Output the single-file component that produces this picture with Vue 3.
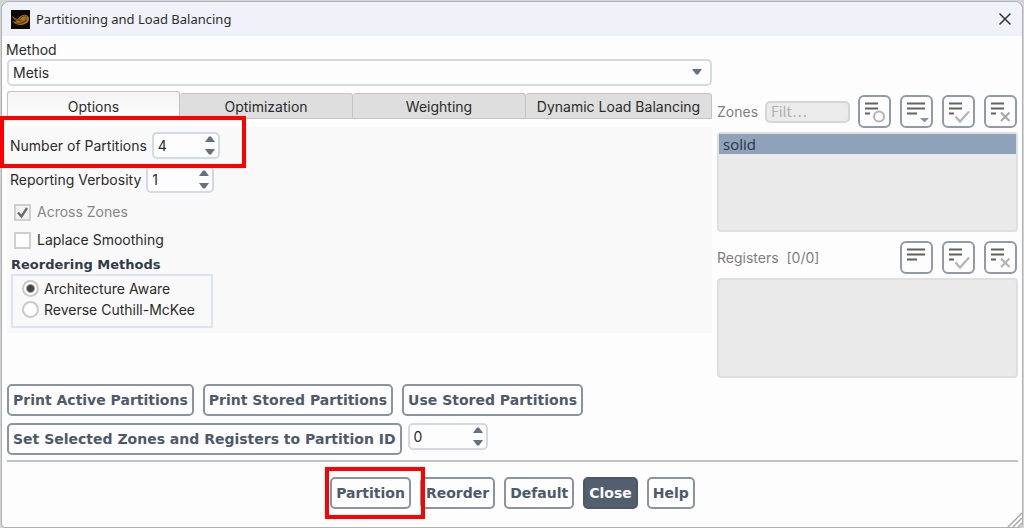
<script setup>
import { ref } from 'vue'

const method = ref('Metis')
const tabs = ['Options', 'Optimization', 'Weighting', 'Dynamic Load Balancing']
const activeTab = ref('Options')
const partitions = ref(4)
const verbosity = ref(1)
const partitionId = ref(0)
const acrossZones = ref(true)
const laplace = ref(false)
const ordering = ref('Architecture Aware')
const orderings = ['Architecture Aware', 'Reverse Cuthill-McKee']
const zoneTools = [
  { kind: 'circle', label: 'Filter mode' },
  { kind: 'menu', label: 'List options' },
  { kind: 'check', label: 'Select all zones' },
  { kind: 'cross', label: 'Deselect all zones' },
]
const registerTools = [
  { kind: 'lines', label: 'List registers' },
  { kind: 'check', label: 'Select all registers' },
  { kind: 'cross', label: 'Deselect all registers' },
]
const isLong = (kind) => kind === 'menu' || kind === 'lines'
</script>

<template>
  <div class="desktop">
    <main class="window">
      <header class="titlebar">
        <svg class="logo" viewBox="0 0 19 19" aria-hidden="true">
          <rect width="19" height="19" fill="#0b0806" />
          <path d="M1 6c2 1 4 3 6 3 2-3 5-5 8-4 3 1 4 4 2 7-3 3-8 4-12 2-2-1-3-2-4-3 2 1 4 1 5 0-2-1-4-2-5-5z" fill="#a8741a" />
          <path d="M8 10c2-4 6-5 8-3M9 12c3 1 6-1 6-4M2 8c3 2 6 3 9 2M5 13c4 1 8 0 11-3" fill="none" stroke="#4a300b" stroke-width=".8" />
        </svg>
        <h1>Partitioning and Load Balancing</h1>
        <button class="close-x" aria-label="Close window">
          <svg viewBox="0 0 14 14"><path d="M1.500 1.500l11 11M12.500 1.500l-11 11" stroke="#333" stroke-width="1.500" /></svg>
        </button>
      </header>

      <div class="content">
        <div class="columns">
          <section class="left">
            <label class="method-label" for="method">Method</label>
            <div class="select-wrap">
              <select id="method" v-model="method"><option>Metis</option></select>
              <svg class="caret" viewBox="0 0 10 6"><path d="M0 0h10l-4 5.500h-2z" fill="#657180" /></svg>
            </div>

            <div class="tabs" role="tablist">
              <button v-for="t in tabs" :key="t" role="tab" class="tab" :class="{ active: t === activeTab }" :aria-selected="t === activeTab" @click="activeTab = t">{{ t }}</button>
            </div>

            <div class="panel">
              <div class="field marked">
                <label for="parts">Number of Partitions</label>
                <div class="spin">
                  <input id="parts" v-model="partitions" type="number" />
                  <div class="steps">
                    <button aria-label="Increase partitions" @click="partitions++"><svg viewBox="0 0 10 6"><path d="M0 6h10l-4-5.500h-2z" /></svg></button>
                    <button aria-label="Decrease partitions" @click="partitions--"><svg viewBox="0 0 10 6"><path d="M0 0h10l-4 5.500h-2z" /></svg></button>
                  </div>
                </div>
                <span class="mark mark-field"></span>
              </div>
              <div class="field">
                <label for="verb">Reporting Verbosity</label>
                <div class="spin">
                  <input id="verb" v-model="verbosity" type="number" />
                  <div class="steps">
                    <button aria-label="Increase verbosity" @click="verbosity++"><svg viewBox="0 0 10 6"><path d="M0 6h10l-4-5.500h-2z" /></svg></button>
                    <button aria-label="Decrease verbosity" @click="verbosity--"><svg viewBox="0 0 10 6"><path d="M0 0h10l-4 5.500h-2z" /></svg></button>
                  </div>
                </div>
              </div>
              <label class="tick disabled">
                <span class="box">
                  <input v-model="acrossZones" type="checkbox" disabled />
                  <svg v-if="acrossZones" viewBox="0 0 17 17"><path d="M4 8.500l3.500 4L13 4" fill="none" stroke="#6d6d6d" stroke-width="2.400" /></svg>
                </span>
                Across Zones
              </label>
              <label class="tick">
                <span class="box">
                  <input v-model="laplace" type="checkbox" />
                  <svg v-if="laplace" viewBox="0 0 17 17"><path d="M4 8.500l3.500 4L13 4" fill="none" stroke="#444" stroke-width="2.400" /></svg>
                </span>
                Laplace Smoothing
              </label>
              <h2 id="reorder-title">Reordering Methods</h2>
              <div class="radios" role="radiogroup" aria-labelledby="reorder-title">
                <label v-for="o in orderings" :key="o">
                  <input v-model="ordering" type="radio" name="ordering" :value="o" />{{ o }}
                </label>
              </div>
            </div>
          </section>

          <section class="right">
            <div class="list-head">
              <label class="muted" for="filter">Zones</label>
              <input id="filter" class="filter" type="text" placeholder="Filt⋯" />
              <div class="tools">
                <button v-for="b in zoneTools" :key="b.kind" class="tool" :aria-label="b.label">
                  <svg viewBox="0 0 33 33" fill="none">
                    <path :d="isLong(b.kind) ? 'M7 8.500h18M7 13.500h18M7 18.500h10' : 'M7 8.500h13M7 13.500h13M7 18.500h5'" stroke="#636363" stroke-width="2.200" />
                    <circle v-if="b.kind === 'circle'" cx="21" cy="21.500" r="5" stroke="#b4b4b4" stroke-width="2" />
                    <path v-if="b.kind === 'menu'" d="M20 23h9l-4 4h-1z" fill="#8793a4" />
                    <path v-if="b.kind === 'check'" d="M13.500 21.500l4.500 5 9-10" stroke="#b4b4b4" stroke-width="2.200" />
                    <path v-if="b.kind === 'cross'" d="M17 17.500l8.500 8.500M25.500 17.500l-8.500 8.500" stroke="#a9a9a9" stroke-width="2.200" />
                  </svg>
                </button>
              </div>
            </div>
            <ul class="list" role="listbox" aria-label="Zones">
              <li role="option" aria-selected="true">solid</li>
            </ul>
            <div class="list-head">
              <span class="muted">Registers&nbsp; [0/0]</span>
              <div class="tools">
                <button v-for="b in registerTools" :key="b.kind" class="tool" :aria-label="b.label">
                  <svg viewBox="0 0 33 33" fill="none">
                    <path :d="isLong(b.kind) ? 'M7 8.500h18M7 13.500h18M7 18.500h10' : 'M7 8.500h13M7 13.500h13M7 18.500h5'" stroke="#5f605c" stroke-width="2.200" />
                    <path v-if="b.kind === 'check'" d="M13.500 21.500l4.500 5 9-10" stroke="#b4b4b4" stroke-width="2.200" />
                    <path v-if="b.kind === 'cross'" d="M17 17.500l8.500 8.500M25.500 17.500l-8.500 8.500" stroke="#b4b4b4" stroke-width="2.200" />
                  </svg>
                </button>
              </div>
            </div>
            <ul class="list" role="listbox" aria-label="Registers"></ul>
          </section>
        </div>

        <div class="actions">
          <div class="row">
            <button class="btn">Print Active Partitions</button>
            <button class="btn">Print Stored Partitions</button>
            <button class="btn">Use Stored Partitions</button>
          </div>
          <div class="row assign">
            <button class="btn">Set Selected Zones and Registers to Partition ID</button>
            <div class="spin wide">
              <input v-model="partitionId" type="number" aria-label="Partition ID" />
              <div class="steps">
                <button aria-label="Increase partition ID" @click="partitionId++"><svg viewBox="0 0 10 6"><path d="M0 6h10l-4-5.500h-2z" /></svg></button>
                <button aria-label="Decrease partition ID" @click="partitionId--"><svg viewBox="0 0 10 6"><path d="M0 0h10l-4 5.500h-2z" /></svg></button>
              </div>
            </div>
          </div>
        </div>

        <footer class="footer">
          <div class="marked">
            <button class="btn">Partition</button>
            <span class="mark mark-button"></span>
          </div>
          <button class="btn">Reorder</button>
          <button class="btn">Default</button>
          <button class="btn dark">Close</button>
          <button class="btn">Help</button>
        </footer>
      </div>
      <svg class="grip" viewBox="0 0 15 15"><path d="M1 15L15 1M6 15l9-9M11 15l4-4" stroke="#aaa" stroke-width="1.500" /></svg>
    </main>
  </div>
</template>

<style>
body { margin: 0; background: #d4d4d6; }
</style>

<style scoped>
* { box-sizing: border-box; }
.desktop { min-height: 100vh; padding: 1px 1px 0; display: flex; font: 14px/18px Inter, "Noto Sans CJK JP", sans-serif; color: #2b2b2b; }
.window { position: relative; flex: 1; border: 1px solid #aeb0b4; border-radius: 8px 8px 4px 4px; background: #fdfdfd; }
button, input, select { font: inherit; color: inherit; margin: 0; }
button { padding: 0; border: 0; background: none; }
.titlebar { height: 34px; display: flex; align-items: center; gap: 6px; padding: 0 10px 0 9px; background: #eff3f9; border-radius: 8px 8px 0 0; }
.logo { width: 19px; height: 19px; }
h1 { margin: 0; flex: 1; font: 400 13px/20px "Noto Sans", sans-serif; }
.close-x { width: 14px; height: 14px; }
svg { display: block; }
.content { padding: 4px 4px 0 5px; }
.columns { display: grid; grid-template-columns: minmax(0, 1fr) 301px; gap: 5px; }
.left { min-width: 0; }
.method-label { display: block; margin-left: -1px; line-height: 19px; }
.select-wrap { position: relative; }
select { display: block; width: 100%; height: 27px; padding: 0 4px; appearance: none; border: 2px solid #d3dae6; border-radius: 5px; background: #fdfdfd; }
.caret { position: absolute; right: 10px; top: 10px; width: 10px; height: 6px; }
.tabs { display: grid; grid-template-columns: 173fr 173fr 173fr 186fr; align-items: end; margin-top: 5px; }
.tab { height: 26px; padding-top: 2px; border: 1px solid #c3c3c3; border-left-width: 0; border-radius: 3px 3px 0 0; background: #dedede; }
.tab.active { height: 28px; border-left-width: 1px; border-bottom: 0; background: linear-gradient(#f3f3f3, #fdfdfd); }
.panel { margin-top: 8px; padding: 5px 4px 5px; background: #f9f9f9; display: flex; flex-direction: column; align-items: flex-start; }
.field { display: flex; align-items: center; gap: 5px; margin-bottom: 7px; margin-left: -1px; }
.field + .tick { margin-top: -2px; }
.marked { position: relative; }
.mark { position: absolute; border: 4px solid #fe0000; pointer-events: none; }
.mark-field { left: -10px; right: -26px; top: -16px; bottom: -9px; }
.mark-button { left: -5px; right: -14px; top: -10px; bottom: -10px; }
.spin { display: flex; align-items: center; width: 68px; height: 27px; padding: 0 2px; border: 2px solid #d3dae6; border-radius: 5px; background: #fdfdfd; }
.spin.wide { width: 80px; }
.spin input { flex: 1; min-width: 0; width: 0; padding: 0 0 0 2px; border: 0; background: none; outline: 0; appearance: textfield; }
.spin input::-webkit-inner-spin-button { appearance: none; margin: 0; }
.steps { display: flex; flex-direction: column; gap: 7px; }
.steps svg { width: 12px; height: 6px; fill: #657180; }
.tick { display: flex; align-items: center; gap: 6px; height: 28px; padding-left: 3px; }
.tick.disabled { color: #858585; }
.box { position: relative; width: 17px; height: 17px; }
.box input { display: block; width: 17px; height: 17px; appearance: none; border: 2px solid #cfcfcf; background: #fff; }
.box input:disabled { background: #f2f2f2; }
.box svg { position: absolute; inset: 0; }
h2 { margin: 2px 0 0; font: 700 13px/18px "DejaVu Sans", sans-serif; color: #2f3c4b; }
.radios { display: flex; flex-direction: column; padding: 2px 16px 6px 9px; border: 2px solid #dde2ec; }
.radios label { display: flex; align-items: center; gap: 5px; height: 21px; }
.radios input { appearance: none; width: 17px; height: 17px; border: 2px solid #c9c9c9; border-radius: 50%; background: #fff; }
.radios input:checked { background: radial-gradient(circle, #444 0 3px, #fff 5px); }
.right { padding-top: 55px; }
.list-head { display: flex; align-items: center; gap: 7px; height: 33px; padding-right: 1px; }
.muted { color: #7d7d7d; }
.filter { width: 85px; min-width: 0; height: 22px; padding: 0 4px; border: 2px solid #d6d6d6; border-radius: 5px; background: #ebebeb; }
.filter::placeholder { color: #b0b0b0; opacity: 1; font-family: "Noto Sans CJK JP", sans-serif; }
.tools { display: flex; gap: 9px; margin-left: auto; }
.tool { width: 33px; height: 33px; border: 2px solid #909aaa; border-radius: 6px; background: #fdfdfd; }
.tool svg { width: 33px; height: 33px; margin: -2px; }
.list { list-style: none; height: 100px; margin: 4px 0 9px; padding: 0; border: 2px solid #dfdfdf; border-radius: 4px; background: #eaeaea; }
.list:last-child { margin-bottom: 6px; }
.list li { height: 20px; padding-left: 4px; background: #8ea3b9; font: 15px/20px "Open Sans", sans-serif; color: #2c3340; }
.actions { display: flex; flex-direction: column; gap: 7px; padding-bottom: 5px; }
.row { display: flex; align-items: center; gap: 9px; }
.assign { align-items: flex-start; gap: 6px; }
.btn { height: 32px; padding: 0 4px; border: 2px solid #8993a2; border-radius: 5px; background: #fdfdfd; color: #4d5a6a; font: 700 14px/18px "DejaVu Sans", sans-serif; white-space: nowrap; }
.footer { display: flex; justify-content: center; gap: 9px; padding: 15px 0 17px; border-top: 2px solid #c0c0c0; }
.btn.dark { background: #535f6e; border-color: #4c5867; color: #fdfdfd; }
.grip { position: absolute; right: 0; bottom: 0; width: 15px; height: 15px; }
</style>
